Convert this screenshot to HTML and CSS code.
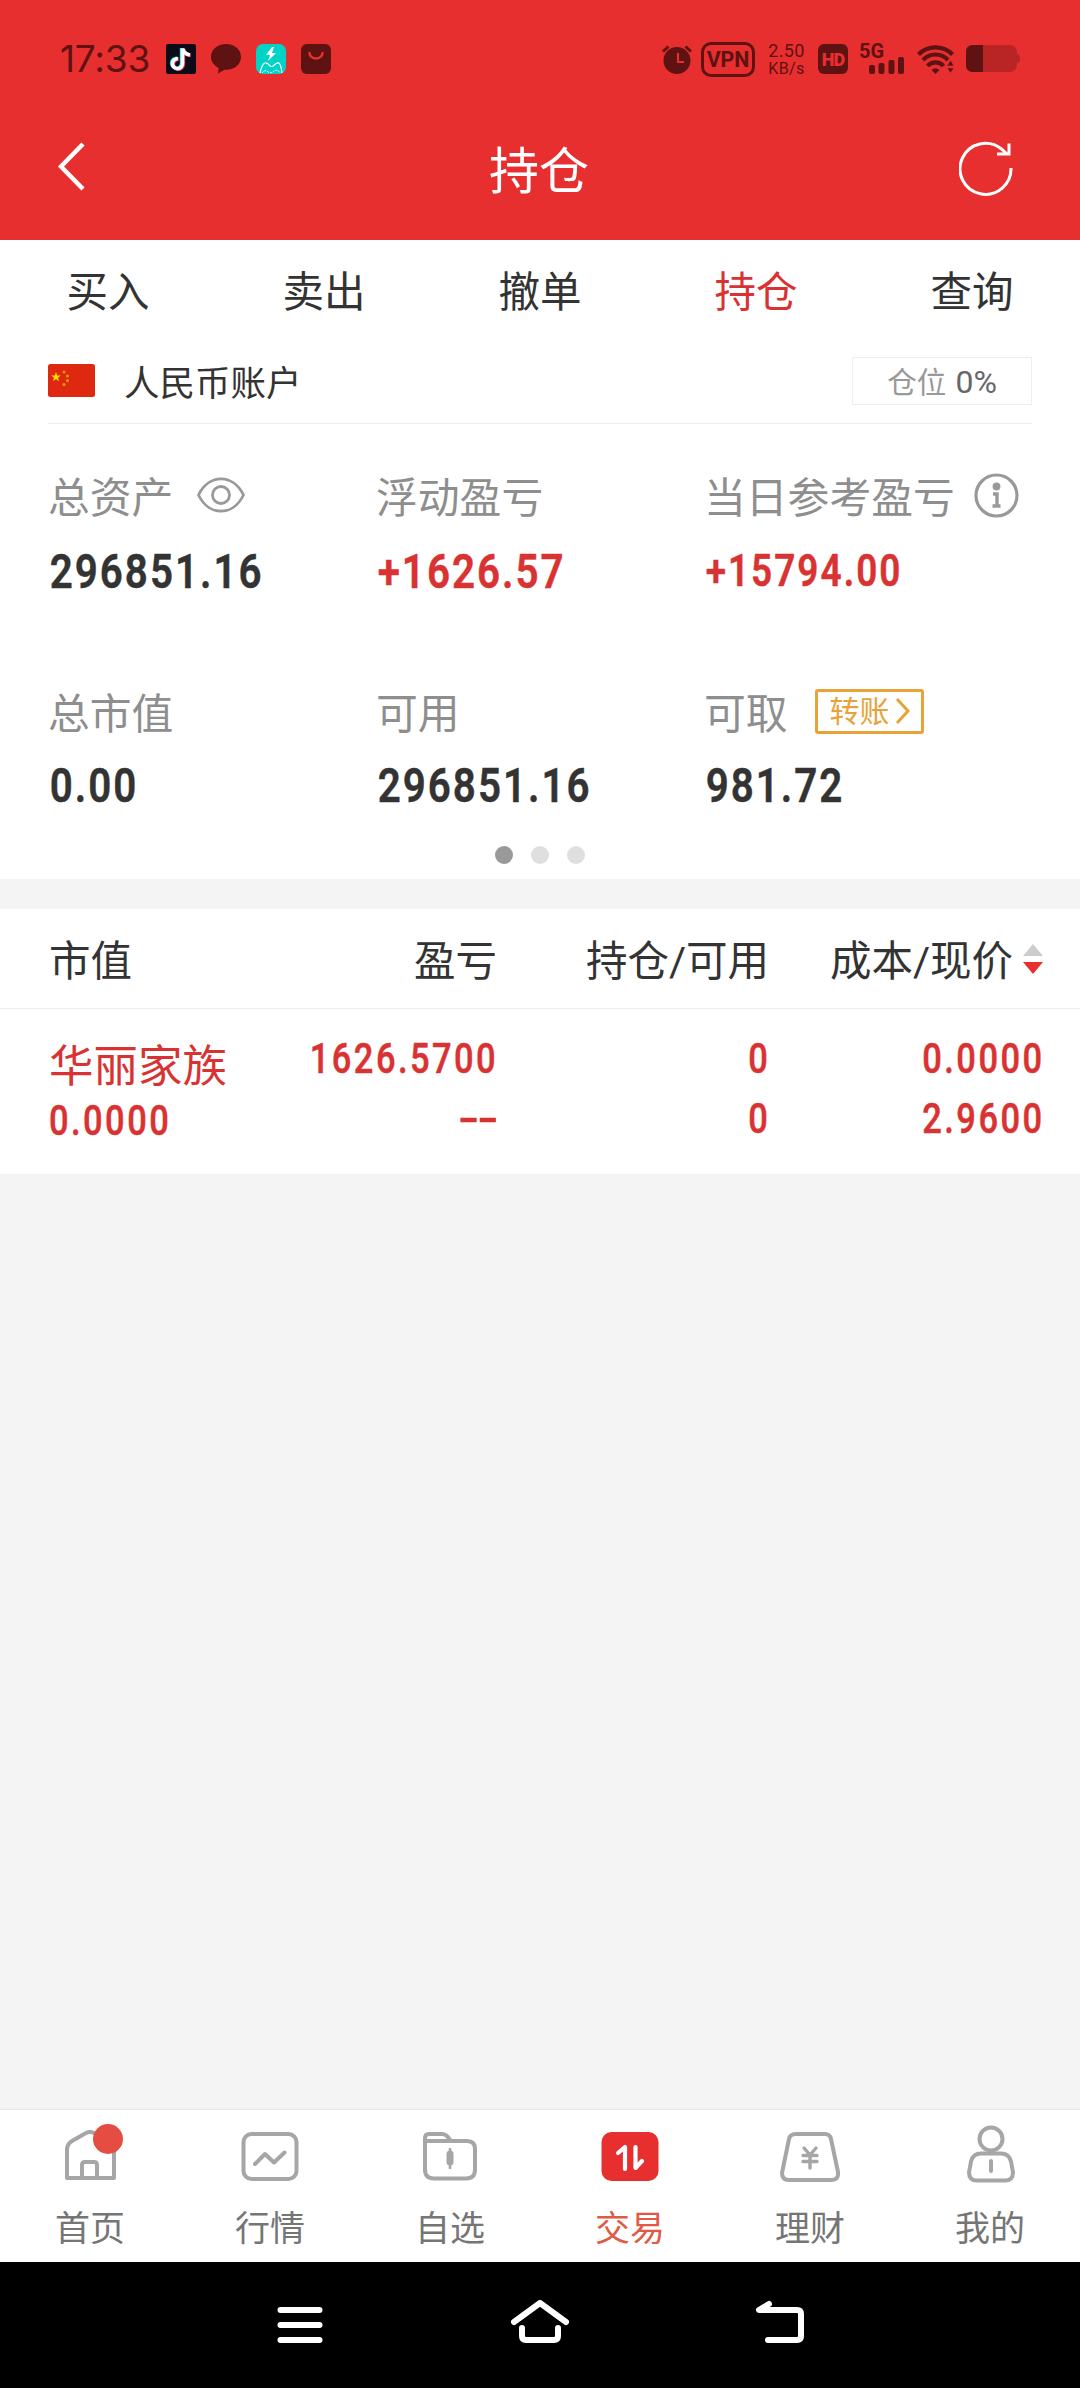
FILE: index.html
```html
<!DOCTYPE html>
<html lang="zh-CN">
<head>
<meta charset="utf-8">
<title>持仓</title>
<link rel="stylesheet" href="styles.css">
</head>
<body>
<header class="top">
  <div class="status">
    <div class="status-left">
      <span class="time">17:33</span>
      <svg width="30" height="30" viewBox="0 0 30 30"><rect width="30" height="30" rx="2" fill="#0b0c18"/><g fill="none" stroke-width="3.6"><path d="M15.6 4v15.2a5 5 0 1 1-4.6-5M15.6 4.500q1.500 5.500 7.400 6.500" stroke="#25e0dc"/><path d="M17.400 5v15.200a5 5 0 1 1-4.600-5M17.400 5q1.500 5.500 7.400 6.500" stroke="#f52c56"/><path d="M16.500 4.500v15.200a5 5 0 1 1-4.600-5M16.500 4.500q1.500 5.500 7.400 6.500" stroke="#fff"/></g></svg>
      <svg width="30" height="30" viewBox="0 0 30 30"><path d="M15 0C6.500 0 0 5.500 0 13c0 4.500 3 8.500 7.500 11L7 29.500l6.500-3.700C23 26.500 30 20.500 30 13 30 5.500 23.500 0 15 0Z" fill="#5e1212"/></svg>
      <svg width="30" height="30" viewBox="0 0 30 30"><rect width="30" height="30" rx="7" fill="#02d3c7"/><path d="m16 3-6 8h4l-2 6 8-8h-4l2-6Z" fill="#fff"/><path d="M4 29q2-9 5-10 2-1 5 3 1 1 3 0 4-4 6-3 2 2 3 10" fill="none" stroke="#fff" stroke-width="1.200"/><path d="M6 29q3-4 6-1 3 2 6-1 4-2 6 2" fill="none" stroke="#fff" stroke-dasharray="2 1"/></svg>
      <svg width="30" height="30" viewBox="0 0 30 30"><rect width="30" height="30" rx="6" fill="#5e1212"/><path d="M8.500 9a6.500 5.500 0 0 0 13 0" fill="none" stroke="#e72f2f" stroke-width="2.500" stroke-linecap="round"/></svg>
    </div>
    <div class="status-right">
      <svg class="alarm" width="30" height="30" viewBox="0 0 30 30"><circle cx="15" cy="16.500" r="13.500" fill="#5e1212"/><path d="m1 7.500 5.500-5M29 7.500 23.500 2.500" stroke="#5e1212" stroke-width="3"/><path d="M16 9v9h6" fill="none" stroke="#e72f2f" stroke-width="2.200"/></svg>
      <span class="vpn"><span>VPN</span></span>
      <span class="speed"><span>2.50</span><span class="unit">KB/s</span></span>
      <span class="hd">HD</span>
      <span class="signal"><span class="net">5G</span><svg width="36" height="18" viewBox="0 0 36 18" fill="#5e1212"><rect y="9" width="6" height="9" rx="2"/><rect x="9.500" y="7" width="6" height="11" rx="2"/><rect x="19.500" y="4" width="6" height="14" rx="2"/><rect x="29" y="1" width="6" height="17" rx="2"/></svg></span>
      <svg class="wifi" width="38" height="30" viewBox="0 0 38 30"><g fill="none" stroke="#5e1212" stroke-width="4.200"><path d="M1.500 10.500a24 24 0 0 1 34 0M6 16a17 17 0 0 1 25 0M10.500 22a10.500 10.500 0 0 1 16 0"/></g><path d="M14.500 26q4-3.500 8 0l-4 4Z" fill="#5e1212"/><path d="M30 22l3.500-6 3.500 6ZM30 24l3.500 5 3.500-5Z" fill="#5e1212" stroke="#e72f2f" stroke-width=".6"/></svg>
      <svg width="54" height="28" viewBox="0 0 54 28"><rect width="51" height="27" rx="7" fill="#b92525"/><path d="M51 9q3 0 3 3v3q0 3-3 3Z" fill="#b92525"/><path d="M7 0h10v27H7q-7 0-7-7V7q0-7 7-7Z" fill="#5e1212"/></svg>
    </div>
  </div>
  <div class="titlebar">
    <svg width="54" height="56" viewBox="0 0 54 56"><path d="M27 4 5 26.500 27 49" fill="none" stroke="#fff" stroke-width="4.500"/></svg>
    <h1>持仓</h1>
    <svg width="54" height="56" viewBox="0 0 54 56"><path d="M52 28A25.500 25.500 0 1 1 42.500 9l6 5.500M50 3.500V14H38" fill="none" stroke="#fff" stroke-width="3"/></svg>
  </div>
</header>

<nav class="tabs"><a>买入</a><a>卖出</a><a>撤单</a><a class="active">持仓</a><a>查询</a></nav>

<section class="account">
  <svg width="47" height="33" viewBox="0 0 47 33"><rect width="47" height="33" rx="2.500" fill="#de2910"/><path d="m8 8 1.200 3.500h3.600L10 13.700l1 3.500-3-2.100-3 2.100 1-3.500-2.800-2.200h3.600Z" fill="#ffde00"/><g fill="#e79a0c"><circle cx="16" cy="8" r="1.500"/><circle cx="19.500" cy="12" r="1.500"/><circle cx="19.500" cy="16.500" r="1.500"/><circle cx="16" cy="20.500" r="1.500"/></g></svg>
  <span class="account-name">人民币账户</span>
  <span class="position">仓位 <b>0%</b></span>
</section>

<section class="summary">
  <div class="stat"><div class="label">总资产<svg class="eye" width="48" height="36" viewBox="0 0 48 36" fill="none" stroke="#999" stroke-width="2.800"><path d="M1.500 18C12-3.500 36-3.500 46.500 18 36 39.500 12 39.500 1.500 18Z"/><circle cx="24" cy="18" r="8.500"/></svg></div><div class="value">296851.16</div></div>
  <div class="stat"><div class="label">浮动盈亏</div><div class="value red">+1626.57</div></div>
  <div class="stat"><div class="label">当日参考盈亏<svg class="info" width="45" height="45" viewBox="0 0 45 45"><circle cx="22.500" cy="22.500" r="20.500" fill="none" stroke="#999" stroke-width="3.200"/><circle cx="22.500" cy="13.500" r="3.900" fill="#999"/><path d="M19 21h4v12m-4.500 0h8" fill="none" stroke="#999" stroke-width="3.400"/></svg></div><div class="value red small">+15794.00</div></div>
  <div class="stat"><div class="label">总市值</div><div class="value">0.00</div></div>
  <div class="stat"><div class="label">可用</div><div class="value">296851.16</div></div>
  <div class="stat"><div class="label">可取<span class="transfer">转账<svg width="16" height="28" viewBox="0 0 16 28"><path d="m2 2 11 12L2 26" fill="none" stroke="#e9a238" stroke-width="3"/></svg></span></div><div class="value">981.72</div></div>
</section>
<div class="dots"><i class="on"></i><i></i><i></i></div>

<section class="holdings">
  <div class="row head"><span>市值</span><span>盈亏</span><span>持仓/可用</span><span class="sort">成本/现价<svg width="20" height="32" viewBox="0 0 20 32"><path d="m10 0 10 12H0Z" fill="#ccc"/><path d="M0 18h20L10 30Z" fill="#e72f2f"/></svg></span></div>
  <div class="row item">
    <div><span class="name">华丽家族</span><span class="num">0.0000</span></div>
    <div><span class="num">1626.5700</span><span class="num dash">--</span></div>
    <div><span class="num">0</span><span class="num">0</span></div>
    <div><span class="num">0.0000</span><span class="num">2.9600</span></div>
  </div>
</section>

<nav class="bottom">
  <a><span class="icon"><svg width="64" height="64" viewBox="0 0 64 64"><path d="M9 58V30q0-6 5-9l14-8q4-2 8 0l15 8q5 3 5 9v28ZM24 58V45q0-3 3-3h9q3 0 3 3v13"/></svg><i class="badge"></i></span>首页</a>
  <a><span class="icon"><svg width="64" height="64" viewBox="0 0 64 64"><rect x="5.500" y="14" width="53" height="45" rx="8"/><path d="m17 44 10-10 9 8.500L46.500 32.500" stroke-linecap="round"/></svg></span>行情</a>
  <a><span class="icon"><svg width="64" height="64" viewBox="0 0 64 64"><path d="M7 21V18q0-4 4-4h13q5 0 8.500 6.700M7 21h42q8 0 8 8v20.500q0 9-9 9H16q-9 0-9-9Z"/><path d="M32 28v21" stroke-width="2.500"/><path d="M32 34v8" stroke-width="7" stroke-linecap="round"/></svg></span>自选</a>
  <a class="active"><span class="icon"><svg width="64" height="64" viewBox="0 0 64 64"><rect x="3.500" y="12" width="57" height="49" rx="10" fill="#e72f2f" stroke="none"/><path d="m20 33 7-6v22M37.500 27v21l6.500-7" stroke="#fff" stroke-width="4.200" stroke-linecap="round"/></svg></span>交易</a>
  <a><span class="icon"><svg width="64" height="64" viewBox="0 0 64 64"><path d="M18 14h29q5 0 6 5l7 33q1 8-7 8H11q-7 0-7-7l7-34q1-5 7-5Z"/><path d="m26 28 6 7 6-7M32 35v13M25 35.500h14M25 41.500h14" stroke-width="3.400" stroke-linecap="round"/></svg></span>理财</a>
  <a><span class="icon"><svg width="64" height="64" viewBox="0 0 64 64"><circle cx="33" cy="19" r="11.500"/><path d="M23 33.500h20q8 0 10 8l2 11q0 8-8 8H19q-8 0-8-8l2-11q2-8 10-8Z"/><path d="M33 41v10" stroke-linecap="round"/></svg></span>我的</a>
</nav>

<footer class="system">
  <svg width="60" height="50" viewBox="0 0 60 50"><path d="M10.500 10h39M10.500 25h39M10.500 40h39"/></svg>
  <svg width="60" height="50" viewBox="0 0 60 50"><path d="M4 22 30 3l26 19M12 28v8q0 4 4 4h28q4 0 4-4v-8"/></svg>
  <svg width="60" height="50" viewBox="0 0 60 50"><path d="M19 4 9 10h38q4 0 4 4v22q0 4-4 4H18"/></svg>
</footer>
</body>
</html>
```
FILE: styles.css
```css
* { box-sizing: border-box; }
body {
  margin: 0;
  width: 1080px;
  height: 2388px;
  display: flex;
  flex-direction: column;
  background: #f4f4f4;
  color: #333;
  font-family: Roboto, "Noto Sans CJK SC", sans-serif;
  overflow: hidden;
}
svg { display: block; flex: none; }
i { display: block; }

.top { height: 240px; background: #e72f2f; }
.status {
  height: 118px;
  padding: 0 60px;
  display: flex;
  justify-content: space-between;
  align-items: center;
  color: #5e1212;
}
.status-left { display: flex; align-items: center; gap: 15px; }
.time { width: 91px; font-size: 37px; line-height: 44px; letter-spacing: -0.2px; font-family: Inter, sans-serif; }
.status-right { display: flex; align-items: center; }
.vpn {
  margin-left: 9px;
  width: 54px;
  height: 35px;
  border: 3px solid #5e1212;
  border-radius: 10px;
  font-size: 22px;
  font-weight: 700;
  line-height: 30px;
  display: flex;
  justify-content: center;
}
.vpn span { transform: scaleX(.97); }
.speed { margin-left: 12px; width: 39px; font-size: 18px; line-height: 18px; text-align: center; display: flex; flex-direction: column; letter-spacing: .4px; }
.unit { font-size: 16px; line-height: 17px; }
.hd {
  margin-left: 12px;
  width: 30px;
  height: 30px;
  border-radius: 6px;
  background: #5e1212;
  color: #e72f2f;
  font-size: 18px;
  font-weight: 900;
  line-height: 31px;
  text-align: center;
  letter-spacing: -1px;
}
.signal { margin-left: 11px; display: flex; flex-direction: column; align-items: flex-end; width: 46px; }
.net { align-self: flex-start; font-size: 20px; font-weight: 700; line-height: 15px; height: 12px; }
.wifi { margin: 0 11px 0 12px; }

.titlebar { height: 100px; padding: 0 67px 0 56px; display: flex; align-items: center; justify-content: space-between; color: #fff; }
.titlebar h1 { margin: 7px 0 0 9px; font-size: 50px; font-weight: 400; line-height: 60px; }

.tabs { height: 102px; padding-top: 4px; background: #fff; display: grid; grid-template-columns: repeat(5, 1fr); align-items: center; text-align: center; font-size: 41.500px; line-height: 60px; }
.tabs .active { color: #d93232; }

.account { height: 82px; padding: 0 48px 5px; display: flex; align-items: center; background: linear-gradient(#eee, #eee) 48px 81px / 984px 1px no-repeat #fff; }
.account-name { margin-left: 29px; font-size: 35.500px; }
.position { margin-left: auto; width: 180px; height: 48px; border: 1px solid #eee; text-align: center; font-size: 29.500px; line-height: 48px; color: #999; word-spacing: 2px; }
.position b { font-size: 32px; font-weight: 400; color: #666; }

.summary { height: 406px; padding: 41px 48px 0; background: #fff; display: grid; grid-template-columns: repeat(3, 328px); grid-template-rows: 216px 149px; }
.stat { display: flex; flex-direction: column; align-items: flex-start; white-space: nowrap; }
.label { height: 60px; display: flex; align-items: center; font-size: 41.800px; color: #8e8e8e; }
.eye { margin-left: 24px; }
.info { margin-left: 19px; }
.transfer { margin-left: 27px; height: 45px; width: 109px; padding-left: 12px; border: 3px solid #e9a238; border-radius: 3px; display: flex; align-items: center; gap: 5px; color: #e9a238; font-size: 30px; line-height: 39px; }
.value { margin-top: 19px; padding-left: 2px; font-size: 48px; line-height: 56px; font-weight: 600; letter-spacing: 2.400px; transform: scaleX(.84); transform-origin: left; -webkit-text-stroke: .5px; }
.stat:nth-child(n+4) .value { margin-top: 17px; }
.red { color: #d93232; }
.value.small { font-size: 45px; line-height: 54px; letter-spacing: 2.500px; transform: scaleX(.82); }

.dots { height: 49px; padding-top: 16px; background: #fff; display: flex; justify-content: center; gap: 18px; }
.dots i { width: 18px; height: 18px; border-radius: 50%; background: #dfdfdf; }
.dots .on { background: #999; }

.holdings { margin-top: 30px; background: #fff; }
.row { display: grid; grid-template-columns: 248px 200px 272px 274px; padding-left: 49px; }
.head { height: 100px; padding-top: 6px; border-bottom: 1px solid #eee; align-items: center; text-align: right; font-size: 41.500px; line-height: 60px; }
.head > :first-child { text-align: left; }
.sort { display: flex; justify-content: flex-end; align-items: center; gap: 10px; }
.sort svg { margin-bottom: 4px; }
.item { height: 165px; padding-top: 20px; color: #d93232; }
.item div { display: flex; flex-direction: column; align-items: flex-end; }
.item div:first-child { align-items: flex-start; }
.name { height: 62px; padding-top: 9px; line-height: 58px; font-size: 44.500px; }
.num { height: 60px; line-height: 60px; font-size: 42px; font-weight: 500; letter-spacing: 3px; margin-right: -2px; transform: scaleX(.82); transform-origin: calc(100% - 3px) 50%; -webkit-text-stroke: .5px; }
.item div:first-child .num { transform-origin: left; }
.num.dash { letter-spacing: -.7px; margin-right: 0; transform: scaleX(1.42); transform-origin: right; }

.bottom { margin-top: auto; height: 153px; border-top: 1px solid #e8e8e8; padding-top: 10px; background: #fff; display: grid; grid-template-columns: repeat(6, 1fr); color: #757575; font-size: 35px; line-height: 44px; text-align: center; }
.bottom a { display: flex; flex-direction: column; align-items: center; gap: 24px; }
.bottom .active { color: #e05a45; }
.icon { position: relative; }
.icon svg { fill: none; stroke: #a6a6a6; stroke-width: 4; stroke-linejoin: round; }
.badge { position: absolute; left: 35px; top: 4px; width: 30px; height: 30px; border-radius: 50%; background: #e54d42; }

.system { height: 126px; background: #000; padding: 0 270px; display: flex; justify-content: space-between; align-items: center; }
.system svg { fill: none; stroke: #fff; stroke-width: 6; stroke-linecap: round; stroke-linejoin: round; }
```
